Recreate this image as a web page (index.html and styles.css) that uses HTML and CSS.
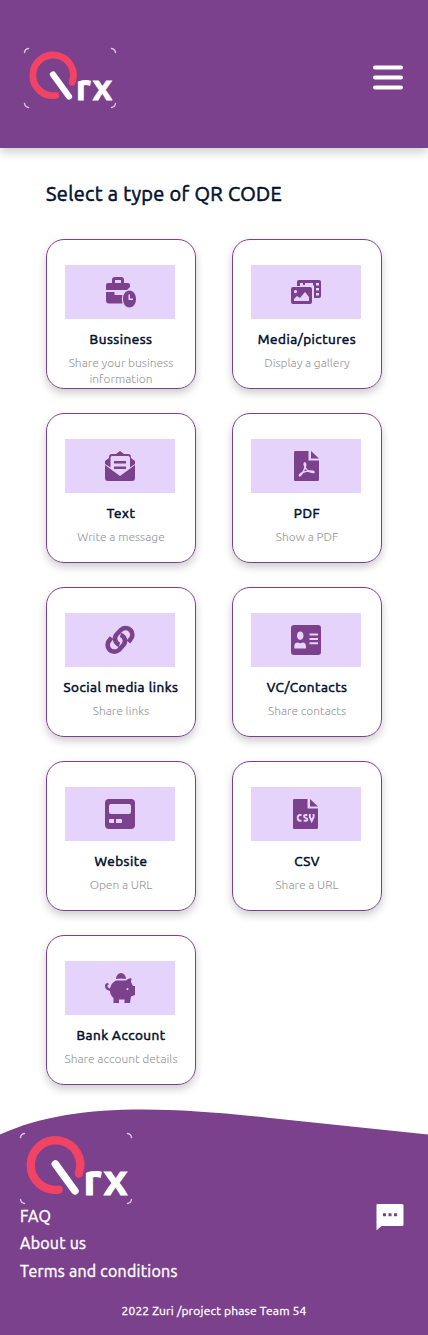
FILE: index.html
```html
<!DOCTYPE html>
<html lang="en">
<head>
<meta charset="utf-8">
<meta name="viewport" content="width=device-width, initial-scale=1">
<title>Qrx</title>
<link rel="stylesheet" href="styles.css">
</head>
<body>
<header class="header">
  <svg class="logo" width="92" height="60" viewBox="0 0 92 60" role="img" aria-label="Qrx">
    <defs>
      <g id="mark">
        <path class="ring" d="M31.700 47.500A20.300 20.300 0 1 1 48.200 34.300"/>
        <path class="slash" d="M29 26.500L45 48.500"/>
        <text class="logo-text" y="52"><tspan x="51.800">r</tspan><tspan x="68.400">x</tspan></text>
      </g>
    </defs>
    <path class="corner" d="M.5 4.500Q1 1 4.500 .5M87.500 .5Q91 1 91.500 4.500M.5 55.500Q1 59 4.500 59.500M87.500 59.500Q91 59 91.500 55.500"/>
    <use href="#mark"/>
  </svg>
  <svg class="menu" width="30" height="25" viewBox="0 0 30 25"><path d="M2 2.500H28M2 12.500H28M2 22.500H28"/></svg>
</header>

<main class="main">
  <h1 class="heading">Select a type of QR CODE</h1>
  <div class="grid">
    <article class="card">
      <div class="panel"><svg class="icon-business" width="30" height="31" viewBox="0 0 30 31"><path fill-rule="evenodd" d="M6 6V3Q6 0 9 0H15Q18 0 18 3V6H22Q24 6 24 8V10L21 13H0V8Q0 6 2 6ZM9 6H15V3H9Z"/><path d="M0 15H8.500V18H16.500Q15 22 16.500 26.500H3Q0 26.500 0 23.500Z"/><path fill-rule="evenodd" d="M23.500 13.500C27 13.500 30 17 30 22S27 30.500 23.500 30.500S17 27 17 22S20 13.500 23.500 13.500ZM22.500 17.500V23H27V21.500H24V17.500Z"/></svg></div>
      <h2 class="title">Bussiness</h2>
      <p class="desc desc-business">Share your business information</p>
    </article>
    <article class="card">
      <div class="panel"><svg width="30" height="30" viewBox="0 0 30 30"><path fill-rule="evenodd" d="M6 9V5Q6 3 8 3H28Q30 3 30 5V19Q30 21 28 21H23V9Q23 8 21 8H12V6H9V9ZM14 6V8H22V6ZM25 6V8.500H28V6ZM25 11V13.500H28V11ZM25 16V18.500H28V16Z"/><path fill-rule="evenodd" d="M2 10H19Q21 10 21 12V25Q21 27 19 27H2Q0 27 0 25V12Q0 10 2 10ZM3 24H18V20L14 15L9 21L6 19L3 22ZM4.500 13A1.600 1.600 0 1 0 4.510 13Z"/></svg></div>
      <h2 class="title">Media/pictures</h2>
      <p class="desc">Display a gallery</p>
    </article>
    <article class="card">
      <div class="panel"><svg width="30" height="30" viewBox="0 0 30 30"><path d="M0 14L15 25L30 14V27Q30 30 27 30H3Q0 30 0 27Z"/><path d="M0 13V10L4 7V6Q4 3 7 3H11L15 0L19 3H23Q26 3 26 6V7L30 10V13L25 16.500V7Q25 5 23 5H7Q5.500 5 5.500 7V16.500Z"/><path d="M9 10H21V12.500H9ZM9 15.500H21V18H9Z"/></svg></div>
      <h2 class="title">Text</h2>
      <p class="desc">Write a message</p>
    </article>
    <article class="card">
      <div class="panel"><svg width="30" height="30" viewBox="0 0 30 30"><path d="M4 0H17.500V9.500H28V28.500Q28 30 26.500 30H4Q3 30 3 28.500V1.500Q3 0 4 0ZM20 0L28 7.500H20Z"/><path class="cut" d="M13.500 12Q12.500 13.500 14.500 17Q17.500 22 23 21.500Q23.500 19.500 17.500 20Q10.500 21 8.500 24Q8 25.500 9.500 24.500Q12.500 21.500 14.500 15Q15.200 12 13.500 12Z"/></svg></div>
      <h2 class="title">PDF</h2>
      <p class="desc">Show a PDF</p>
    </article>
    <article class="card">
      <div class="panel"><svg width="30" height="30" viewBox="0 0 30 30"><path class="chain" d="M6.600 12.600L4.700 15A6.500 6.500 0 0 0 14 24.800L18.200 20.300A6.300 6.300 0 0 0 15.500 9.900"/><path class="chain" d="M23.400 17L25.300 14.600A6.500 6.500 0 0 0 16 4.800L11.800 9.300A6.300 6.300 0 0 0 14.500 19.700"/></svg></div>
      <h2 class="title">Social media links</h2>
      <p class="desc">Share links</p>
    </article>
    <article class="card">
      <div class="panel"><svg width="30" height="30" viewBox="0 0 30 30"><path fill-rule="evenodd" d="M3 0H27Q30 0 30 3V27Q30 30 27 30H3Q0 30 0 27V3Q0 0 3 0ZM9.200 6.500C7 6.500 6 8.500 6 10.800S7.300 15 9.200 15S12.500 13 12.500 10.800S11.500 6.500 9.200 6.500ZM3.300 23.500H15V21.500Q15 17.500 11.500 17.500Q9.200 19 6.800 17.500Q3.300 17.500 3.300 21.500ZM18.500 8.500V10.500H27V8.500ZM18.500 13V15H27V13ZM18.500 17.300V19.300H27V17.300Z"/></svg></div>
      <h2 class="title">VC/Contacts</h2>
      <p class="desc">Share contacts</p>
    </article>
    <article class="card">
      <div class="panel"><svg width="30" height="30" viewBox="0 0 30 30"><path fill-rule="evenodd" d="M4 0H26Q30 0 30 4V26Q30 30 26 30H4Q0 30 0 26V4Q0 0 4 0ZM6 5Q4 5 4 7V13Q4 15 6 15H24Q26 15 26 13V7Q26 5 24 5ZM5 20Q4 20 4 21V23Q4 24 5 24H9V20ZM11 20V24H16Q17 24 17 23V21Q17 20 16 20Z"/></svg></div>
      <h2 class="title">Website</h2>
      <p class="desc">Open a URL</p>
    </article>
    <article class="card">
      <div class="panel"><svg width="30" height="30" viewBox="0 0 30 30"><path d="M3 0H16.500V9.500H27V28.500Q27 30 25.500 30H3Q2 30 2 28.500V1.500Q2 0 3 0ZM19 0L27 7.500H19Z"/><path class="cut cut-bold" d="M10.500 16H9Q6.700 16 6.700 18.700Q6.700 21.700 9 21.700H10.500M16.300 16H14.800Q13 16 13 17.300Q13 18.500 14.700 18.900Q16.300 19.300 16.300 20.400Q16.300 21.700 14.600 21.700H12.700M18.800 15V18L20.700 22L22.600 18V15"/></svg></div>
      <h2 class="title">CSV</h2>
      <p class="desc">Share a URL</p>
    </article>
    <article class="card">
      <div class="panel"><svg width="30" height="30" viewBox="0 0 30 30"><path d="M11 6A5 6 0 0 1 21 6Q16 5 11 6Z"/><path fill-rule="evenodd" d="M11 7.500H21L23 6Q25 5 26.500 5.500L26 9L28 13H30V22L26 23.500L25 30H19.500V26.500H14V30H8.500V25Q5 22 5 18Q0 17 0 13Q0 10 3 10L4 11.500L2.500 12Q2 14.500 5 15.500Q6 10 11 7.500ZM22.500 15A1 1 0 1 0 22.510 15Z"/></svg></div>
      <h2 class="title">Bank Account</h2>
      <p class="desc">Share account details</p>
    </article>
  </div>
</main>

<footer class="footer">
  <svg class="wave" width="428" height="27" viewBox="0 0 428 27"><path d="M0 25.500C70 -6 160 -3 270 9L428 25.500V27H0Z"/></svg>
  <div class="footer-body">
    <div>
      <svg class="logo footer-logo" width="112" height="71" viewBox="0 0 112 71" role="img" aria-label="Qrx">
        <path class="corner" d="M.5 4.500Q1 1 4.500 .5M107.500 .5Q111 1 111.500 4.500M.5 66.500Q1 70 4.500 70.500M107.500 70.500Q111 70 111.500 66.500"/>
        <use href="#mark" transform="translate(0 -1.300) scale(1.220)"/>
      </svg>
      <nav class="links"><a>FAQ</a><a>About us</a><a>Terms and conditions</a></nav>
    </div>
    <svg class="chat" width="28" height="27" viewBox="0 0 28 27"><path fill-rule="evenodd" d="M1.500 0H26Q27.500 0 27.500 1.500V20.500Q27.500 22 26 22H5.500L1 26H.5V1Q.5 0 1.500 0ZM7 9.200V12.200H10V9.200ZM12.500 9.200V12.200H15.500V9.200ZM18 9.200V12.200H21V9.200Z"/></svg>
  </div>
  <p class="copyright">2022 Zuri /project phase Team 54</p>
</footer>
</body>
</html>
```

FILE: styles.css
```css
* { box-sizing: border-box; }
body { margin: 0; background: #fff; font-family: Ubuntu, "Noto Sans", sans-serif; color: #02102f; }
h1, h2, p { margin: 0; }
svg { display: block; }
.header { display: flex; justify-content: space-between; height: 148px; padding: 48px 25px 0 24px; background: #7b418d; box-shadow: 0 4px 10px rgba(0,0,0,.2); }
.logo { overflow: visible; }
.ring, .slash, .corner { fill: none; stroke-linecap: round; }
.ring { stroke: #f14465; stroke-width: 6.8; }
.slash { stroke: #fff; stroke-width: 6.2; }
.corner { stroke: #d8c8de; stroke-width: 1.4; }
.logo-text { fill: #fff; stroke: #fff; stroke-width: .9; font: 700 36.5px Ubuntu, "Noto Sans", sans-serif; }
.menu { margin-top: 17px; fill: none; stroke: #fff; stroke-width: 4; stroke-linecap: round; }
.main { padding: 31px 46px 0; }
.heading { height: 30px; font-size: 20px; line-height: 30px; font-weight: 400; letter-spacing: .31px; -webkit-text-stroke: .55px currentColor; white-space: nowrap; }
.grid { display: grid; grid-template-columns: 150px 150px; grid-auto-rows: 150px; gap: 24px 36px; margin-top: 30px; }
.card { padding: 25px 0 0; border: 1px solid #7b418d; border-radius: 18px; text-align: center; box-shadow: 0 4px 8px rgba(0,0,0,.2); white-space: nowrap; }
.panel { display: flex; align-items: center; justify-content: center; width: 110px; height: 54px; margin-left: 18px; background: #e5d3fc; }
.panel svg { fill: #7b418d; }
.panel .icon-business { margin-left: 2px; }
.panel .cut { fill: none; stroke: #e5d3fc; stroke-width: 1.5; }
.panel .cut-bold { stroke-width: 1.9; }
.chain { fill: none; stroke: #7b418d; stroke-width: 4.6; }
.title { margin-top: 10px; font-size: 13.5px; line-height: 20px; font-weight: 400; letter-spacing: .52px; -webkit-text-stroke: .55px currentColor; }
.desc { margin-top: 6px; font-size: 12px; line-height: 16px; font-weight: 300; color: #929297; }
.desc-business { padding: 0 15px; white-space: normal; }
.footer { height: 226px; margin-top: 24px; background: linear-gradient(transparent 26px, #7b418d 26px); color: #fff; }
.wave { fill: #7b418d; }
.footer-body { display: flex; justify-content: space-between; height: 150px; padding: 0 24px 0 20px; }
.footer-logo { margin-top: -3px; }
.links { display: flex; flex-direction: column; margin-top: -1px; font-size: 16px; line-height: 27.400px; letter-spacing: .25px; -webkit-text-stroke: .4px currentColor; }
.chat { margin-top: 68px; fill: #fff; }
.copyright { margin-top: 17px; text-align: center; font-size: 12px; line-height: 16px; letter-spacing: .18px; -webkit-text-stroke: .3px currentColor; }
```
